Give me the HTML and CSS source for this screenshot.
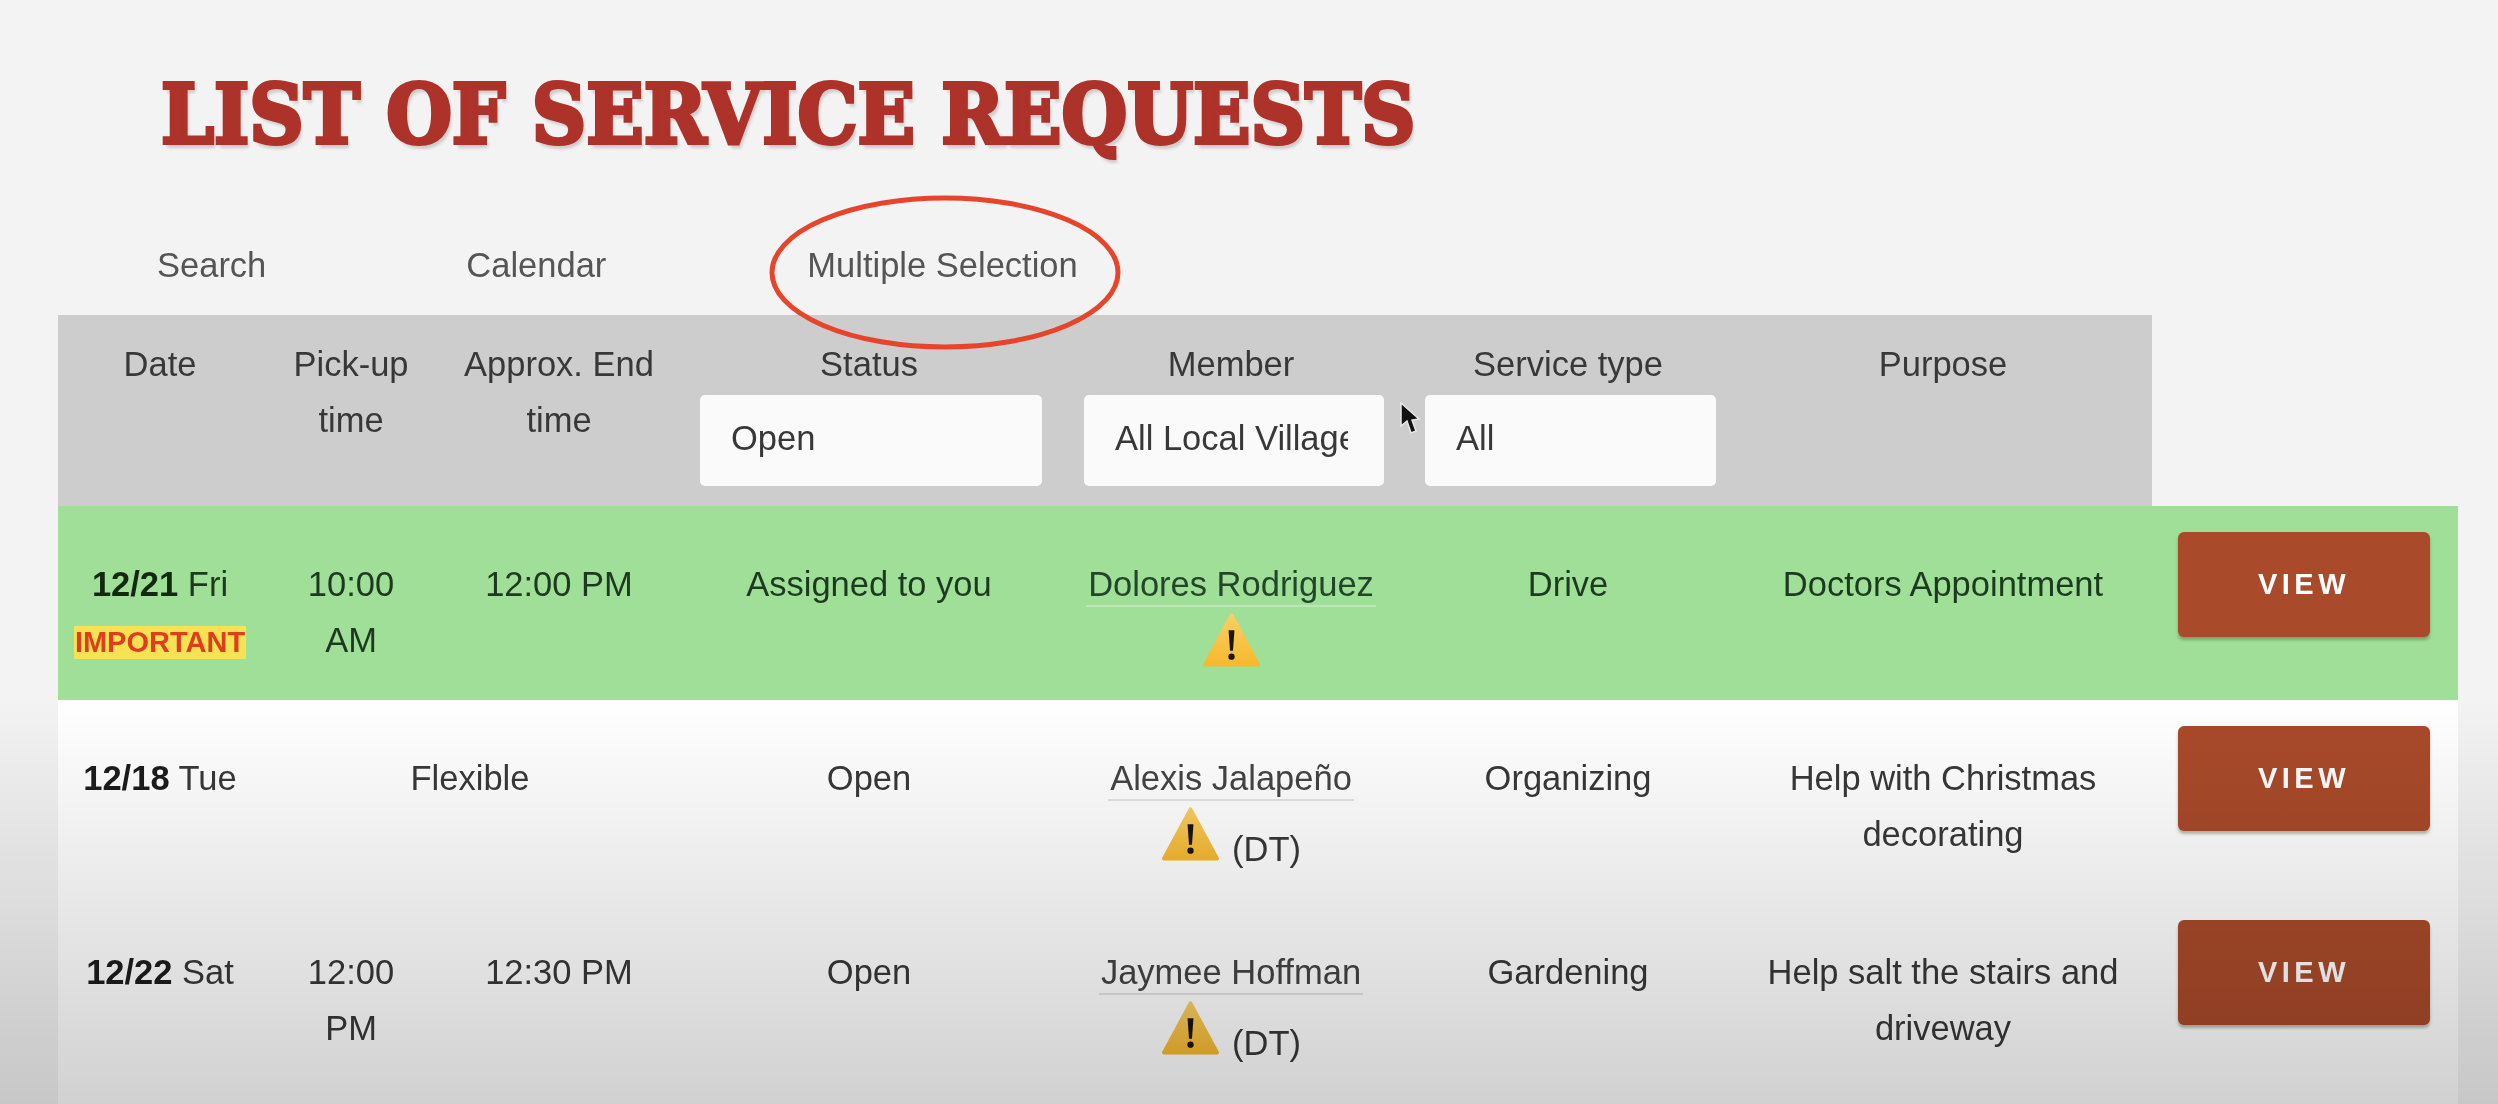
FILE: index.html
```html
<!DOCTYPE html>
<html lang="en">
<head>
<meta charset="utf-8">
<title>List of Service Requests</title>
<link rel="stylesheet" href="styles.css">
</head>
<body>
<div class="page">
  <h1 class="title">LIST OF SERVICE REQUESTS</h1>
  <nav class="tabs">
    <a class="tab">Search</a>
    <a class="tab">Calendar</a>
    <a class="tab">Multiple Selection</a>
  </nav>
  <table class="requests">
    <colgroup>
      <col class="c-date"><col class="c-pick"><col class="c-end"><col class="c-status"><col class="c-member"><col class="c-type"><col class="c-purpose"><col class="c-action">
    </colgroup>
    <thead>
      <tr>
        <th>Date</th>
        <th>Pick-up time</th>
        <th>Approx. End time</th>
        <th>Status<select class="filter f-status"><option>Open</option></select></th>
        <th>Member<select class="filter f-member"><option>All Local Villages</option></select></th>
        <th>Service type<select class="filter f-type"><option>All</option></select></th>
        <th>Purpose</th>
        <th class="blank"></th>
      </tr>
    </thead>
    <tbody>
      <tr class="assigned">
        <td><b>12/21</b> Fri<br><span class="important">IMPORTANT</span></td>
        <td class="pick">10:00 AM</td>
        <td>12:00 PM</td>
        <td>Assigned to you</td>
        <td>
          <span class="name">Dolores Rodriguez</span>
          <div class="flags"><svg class="warn" viewBox="0 0 60 56"><use href="#warning"/></svg></div>
        </td>
        <td>Drive</td>
        <td>Doctors Appointment</td>
        <td class="action"><button class="view">VIEW</button></td>
      </tr>
      <tr>
        <td><b>12/18</b> Tue</td>
        <td colspan="2">Flexible</td>
        <td>Open</td>
        <td>
          <span class="name">Alexis Jalapeño</span>
          <div class="flags"><svg class="warn" viewBox="0 0 60 56"><use href="#warning"/></svg><span class="dt">(DT)</span></div>
        </td>
        <td>Organizing</td>
        <td>Help with Christmas decorating</td>
        <td class="action"><button class="view">VIEW</button></td>
      </tr>
      <tr class="last">
        <td><b>12/22</b> Sat</td>
        <td class="pick">12:00 PM</td>
        <td>12:30 PM</td>
        <td>Open</td>
        <td>
          <span class="name">Jaymee Hoffman</span>
          <div class="flags"><svg class="warn" viewBox="0 0 60 56"><use href="#warning"/></svg><span class="dt">(DT)</span></div>
        </td>
        <td>Gardening</td>
        <td>Help salt the stairs and driveway</td>
        <td class="action"><button class="view">VIEW</button></td>
      </tr>
    </tbody>
  </table>
  <svg class="ring" viewBox="0 0 354 157"><ellipse cx="177" cy="78.5" rx="173" ry="74.5"/></svg>
  <svg class="cursor" viewBox="0 0 22 34"><path d="M2 1 L2 24 L8 19 L12 31 L17 29 L13 18 L20 17 Z"/></svg>
  <div class="vignette"></div>
</div>
<svg class="defs" width="0" height="0">
  <defs>
    <linearGradient id="amber" x1="0" y1="0" x2="0" y2="1">
      <stop offset="0" stop-color="#f8cf63"/>
      <stop offset="1" stop-color="#f6b92f"/>
    </linearGradient>
    <g id="warning">
      <path d="M30 3 L57 53 L3 53 Z" fill="url(#amber)" stroke="url(#amber)" stroke-width="4" stroke-linejoin="round"/>
      <path d="M27 18 L33 18 L31.500 39 L28.500 39 Z" fill="#1c1408"/>
      <circle cx="30" cy="45" r="3.200" fill="#1c1408"/>
    </g>
  </defs>
</svg>
</body>
</html>
```
FILE: styles.css
```css
* { box-sizing: border-box; }
html, body { margin: 0; height: 100%; overflow: hidden; background: #f3f3f3; }
.page {
  position: relative;
  height: 1104px;
  overflow: hidden;
  font-family: "Liberation Sans", Arial, sans-serif;
  font-size: 34.5px;
  line-height: 56px;
  color: #383838;
  filter: blur(0.6px);
}
.title {
  margin: 0;
  height: 219px;
  padding: 61px 0 0 161px;
  font-family: "DejaVu Serif", serif;
  font-weight: 700;
  font-size: 82px;
  line-height: 106px;
  white-space: nowrap;
  color: #ad3229;
  -webkit-text-stroke: 4px #ad3229;
  text-shadow: 3px 5px 3px #cfcbcb;
  transform: scaleX(0.92);
  transform-origin: 160px 0;
}
.tabs { display: flex; gap: 200px; height: 96px; padding: 18px 0 0 157px; color: #555; }
.tab:last-child { margin-left: 1px; }
.requests {
  width: 2400px;
  margin-left: 58px;
  border-collapse: collapse;
  table-layout: fixed;
}
.c-date { width: 204px; }
.c-pick { width: 178px; }
.c-end { width: 238px; }
.c-status { width: 382px; }
.c-member { width: 342px; }
.c-type { width: 332px; }
.c-purpose { width: 418px; }
.c-action { width: 306px; }
th {
  height: 191px;
  padding: 21px 14px 0;
  font-weight: 400;
  vertical-align: top;
  text-align: center;
  background: #cdcdcd;
}
th:nth-child(4), th:nth-child(5), th:nth-child(6) { padding: 21px 0 0; }
th.blank { background: transparent; }
.filter {
  display: block;
  height: 91px;
  margin: 3px 0 0 24px;
  padding: 0 36px 5px 31px;
  border: 0;
  border-radius: 5px;
  appearance: none;
  -webkit-appearance: none;
  background: #fafafa;
  color: #383838;
  font: inherit;
  font-size: 34.5px;
}
.f-status { width: 342px; margin-left: 22px; }
.f-member { width: 300px; }
.f-type { width: 291px; margin-left: 23px; }
td {
  height: 194px;
  padding: 50px 12px 0;
  vertical-align: top;
  text-align: center;
  background: #fff;
}
td.pick { padding-left: 40px; padding-right: 40px; }
tr.last td { height: 210px; }
tr.assigned td { background: #9fdf97; color: #1d3a20; }
b { color: #1c1c1c; }
tr.assigned b { color: #12280f; }
.important {
  display: inline-block;
  padding: 0 1px;
  line-height: 33px;
  vertical-align: middle;
  background: #f6e252;
  color: #dd3f1e;
  font-size: 29px;
  font-weight: 700;
}
.name {
  display: inline-block;
  height: 51px;
  padding: 0 2px;
  border-bottom: 2px solid #e4e4e4;
  line-height: 56px;
  vertical-align: top;
  color: #444;
}
tr.assigned .name { border-bottom-color: #bce6b5; color: #23452a; }
.flags { display: flex; justify-content: center; gap: 12px; height: 64px; margin-top: -1px; }
.warn { display: block; width: 59px; height: 58px; }
.dt { align-self: flex-end; line-height: 40px; }
td.action { padding: 26px 26px 0; text-align: left; }
.view {
  display: block;
  width: 252px;
  height: 105px;
  border: 0;
  border-radius: 6px;
  background: #a94a2a;
  box-shadow: 0 3px 3px rgba(60, 60, 30, 0.35);
  color: #fff;
  font-family: "Liberation Sans", Arial, sans-serif;
  font-weight: 700;
  font-size: 29px;
  letter-spacing: 4.5px;
  padding: 0;
}
.ring { position: absolute; left: 768px; top: 194px; width: 354px; height: 157px; overflow: visible; }
.ring ellipse { fill: none; stroke: #e6452b; stroke-width: 5px; }
.cursor { position: absolute; left: 1399px; top: 402px; width: 22px; height: 34px; }
.cursor path { fill: #111; stroke: #e8e8e8; stroke-width: 1.5px; }
.vignette {
  position: absolute;
  inset: 0;
  pointer-events: none;
  background: linear-gradient(to bottom, rgba(0,0,0,0) 700px, rgba(0,0,0,0.18) 1104px);
}
.defs { position: absolute; }
```
